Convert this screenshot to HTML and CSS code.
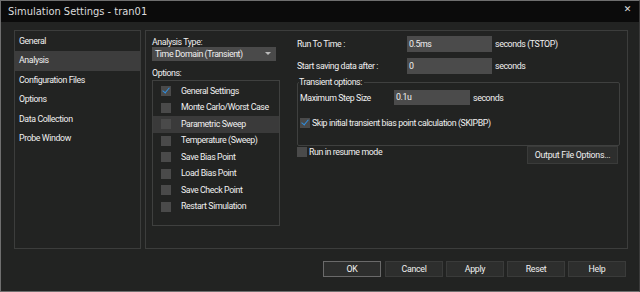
FILE: index.html
```html
<!DOCTYPE html>
<html lang="en">

<head>
  <meta charset="UTF-8">
  <title>Simulation Settings - tran01</title>
  <link rel="stylesheet" href="styles.css">
</head>

<body>
  <div class="window">
    <div class="title-bar">
      <span class="title">Simulation Settings - tran01</span>
      <span class="close">&#x2715;</span>
    </div>

    <div class="content">
      <ul class="nav">
        <li>General</li>
        <li class="active">Analysis</li>
        <li>Configuration Files</li>
        <li>Options</li>
        <li>Data Collection</li>
        <li>Probe Window</li>
      </ul>

      <div class="panel">
        <div class="left-col">
          <label class="label">Analysis Type:</label>
          <div class="select">Time Domain (Transient)<span class="arrow"></span></div>
          <label class="label options-label">Options:</label>
          <ul class="options">
            <li><span class="check checked"></span>General Settings</li>
            <li><span class="check"></span>Monte Carlo/Worst Case</li>
            <li class="hover"><span class="check"></span>Parametric Sweep</li>
            <li><span class="check"></span>Temperature (Sweep)</li>
            <li><span class="check"></span>Save Bias Point</li>
            <li><span class="check"></span>Load Bias Point</li>
            <li><span class="check"></span>Save Check Point</li>
            <li><span class="check"></span>Restart Simulation</li>
          </ul>
        </div>

        <div class="right-col">
          <div class="row">
            <span class="field-label">Run To Time :</span>
            <div class="input wide">0.5ms</div>
            <span class="unit">seconds (TSTOP)</span>
          </div>
          <div class="row">
            <span class="field-label">Start saving data after :</span>
            <div class="input wide">0</div>
            <span class="unit">seconds</span>
          </div>

          <fieldset class="group">
            <legend>Transient options:</legend>
            <div class="row">
              <span class="field-label short">Maximum Step Size</span>
              <div class="input narrow">0.1u</div>
              <span class="unit">seconds</span>
            </div>
            <div class="check-row">
              <span class="check checked"></span>Skip initial transient bias point calculation (SKIPBP)
            </div>
          </fieldset>

          <div class="resume-row">
            <div class="check-row">
              <span class="check"></span>Run in resume mode
            </div>
            <button class="btn output-btn">Output File Options...</button>
          </div>
        </div>
      </div>
    </div>

    <div class="footer">
      <button class="btn default">OK</button>
      <button class="btn">Cancel</button>
      <button class="btn">Apply</button>
      <button class="btn">Reset</button>
      <button class="btn">Help</button>
    </div>
  </div>
</body>

</html>
```

FILE: styles.css
```css
body {
  margin: 0;
  padding: 0;
  width: 640px;
  height: 292px;
  overflow: hidden;
  font-family: Roboto, "Liberation Sans", sans-serif;
  font-size: 8.8px;
  letter-spacing: -0.4px;
  color: #f0f0f0;
  white-space: nowrap;
}

.window {
  box-sizing: border-box;
  width: 640px;
  height: 292px;
  border: 1px solid #6f6f6f;
  border-right-color: #3a3a3a;
  background-color: #222322;
  display: flex;
  flex-direction: column;
}

.title-bar {
  height: 21px;
  background-color: #0b0b0b;
  display: flex;
  align-items: center;
  justify-content: space-between;
  padding: 0 8px 0 7px;
  flex-shrink: 0;
}

.title {
  font-family: "DejaVu Sans Condensed", "DejaVu Sans", sans-serif;
  font-size: 11px;
  letter-spacing: 0;
  color: #dcdcdc;
}

.close {
  font-family: "DejaVu Sans", sans-serif;
  font-size: 9px;
  color: #e0e0e0;
  font-weight: bold;
  margin-top: -6px;
}

.content {
  display: flex;
  gap: 4px;
  padding: 8px 11px 0 13px;
  height: 219px;
}

.nav {
  list-style: none;
  margin: 0;
  padding: 1px 0 0 0;
  width: 125px;
  border: 1px solid #3c3d3c;
  box-sizing: content-box;
}

.nav li {
  height: 19.4px;
  line-height: 18.5px;
  padding-left: 4px;
}

.nav li.active {
  background-color: #3d3d3d;
}

.panel {
  flex: 1;
  border: 1px solid #3c3d3c;
  display: flex;
  padding: 5px 0 0 6px;
}

.left-col {
  width: 128px;
  display: flex;
  flex-direction: column;
}

.label {
  display: block;
  line-height: 12px;
}

.select {
  position: relative;
  height: 14px;
  line-height: 14px;
  width: 121px;
  padding-left: 3px;
  background-color: #4a4a4a;
  margin-top: -1px;
}

.arrow {
  position: absolute;
  right: 5px;
  top: 5px;
  border-left: 3px solid transparent;
  border-right: 3px solid transparent;
  border-top: 3px solid #bbb;
}

.options-label {
  margin-top: 6px;
}

.options {
  list-style: none;
  margin: 1px 0 0 0;
  padding: 2px 0 0 0;
  border: 1px solid #3f403f;
  height: 146px;
  box-sizing: border-box;
}

.options li {
  height: 16.5px;
  line-height: 17px;
  display: flex;
  align-items: center;
  padding-left: 8px;
}

.options li.hover {
  background-color: #3a3a3a;
}

.options li .check {
  margin-right: 10px;
}

.check {
  display: inline-block;
  position: relative;
  width: 10px;
  height: 10px;
  background-color: #4a4a4a;
  flex-shrink: 0;
}

.check.checked::after {
  content: "";
  position: absolute;
  left: 3px;
  top: 0px;
  width: 3px;
  height: 6px;
  border: solid #2f8fe0;
  border-width: 0 1.5px 1.5px 0;
  transform: rotate(40deg);
}

.right-col {
  flex: 1;
  margin-left: 17px;
  margin-top: -1px;
}

.row {
  display: flex;
  align-items: center;
  height: 17px;
  margin-bottom: 5px;
}

.field-label {
  width: 110px;
}

.field-label.short {
  width: 94px;
}

.input {
  height: 16px;
  line-height: 16px;
  background-color: #4b4b4b;
  padding-left: 2px;
  box-sizing: border-box;
}

.input.wide {
  width: 85px;
}

.input.narrow {
  width: 76px;
  height: 15px;
  line-height: 15px;
}

.unit {
  margin-left: 3px;
}

.group {
  margin: -2px 7px 0 0;
  padding: 0 2px 16px 2px;
  border: 1px solid #3f403f;
  border-radius: 2px;
}

.group legend {
  padding: 0 2px 0 0;
  margin-left: -1px;
  line-height: 11px;
}

.group .row {
  margin-top: 1px;
  margin-bottom: 11px;
}

.check-row {
  display: flex;
  align-items: center;
  height: 12px;
}

.check-row .check {
  margin-right: 2px;
}

.resume-row {
  display: flex;
  justify-content: space-between;
  align-items: flex-start;
  margin-top: 0;
  padding-right: 9px;
}

.btn {
  font-family: inherit;
  font-size: 8.8px;
  letter-spacing: -0.3px;
  color: #f0f0f0;
  background-color: #2d2e2d;
  border: 1px solid #3a3b3a;
  height: 18px;
  padding: 0;
}

.output-btn {
  width: 91px;
}

.footer {
  display: flex;
  justify-content: flex-end;
  gap: 3px;
  padding: 12px 13px 0 0;
}

.footer .btn {
  width: 58px;
  height: 16px;
}

.footer .btn.default {
  border-color: #6a6a6a;
  margin-right: 1px;
}
```
